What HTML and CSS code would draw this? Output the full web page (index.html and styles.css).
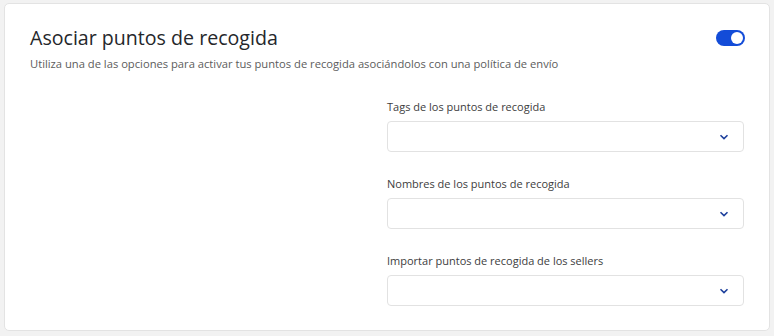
FILE: index.html
```html
<!DOCTYPE html>
<html lang="es">
<head>
<meta charset="utf-8">
<link rel="stylesheet" href="styles.css">
</head>
<body>
<section class="card">
  <div class="head">
    <h1 class="title">Asociar puntos de recogida</h1>
    <span class="toggle"><span class="knob"></span></span>
  </div>
  <p class="desc">Utiliza una de las opciones para activar tus puntos de recogida asociándolos con una política de envío</p>
  <div class="grid">
    <div></div>
    <div class="fields">
      <div class="field">
        <label class="label">Tags de los puntos de recogida</label>
        <div class="select"><svg class="chev" width="10" height="6" viewBox="0 0 10 6"><path d="M1.5 1.2 5 4.6 8.5 1.2" fill="none" stroke="#1d3f9c" stroke-width="1.6"/></svg></div>
      </div>
      <div class="field">
        <label class="label">Nombres de los puntos de recogida</label>
        <div class="select"><svg class="chev" width="10" height="6" viewBox="0 0 10 6"><path d="M1.5 1.2 5 4.6 8.5 1.2" fill="none" stroke="#1d3f9c" stroke-width="1.6"/></svg></div>
      </div>
      <div class="field">
        <label class="label">Importar puntos de recogida de los sellers</label>
        <div class="select"><svg class="chev" width="10" height="6" viewBox="0 0 10 6"><path d="M1.5 1.2 5 4.6 8.5 1.2" fill="none" stroke="#1d3f9c" stroke-width="1.6"/></svg></div>
      </div>
    </div>
  </div>
</section>
</body>
</html>
```
FILE: styles.css
```css
* { box-sizing: border-box; }
html, body { margin: 0; background: #f2f2f2; }
body { padding: 3px 4px 0 4px; font-family: "Open Sans", "Liberation Sans", sans-serif; color: #4a4a4a; }
.card {
  width: 766px;
  height: 328px;
  background: #fff;
  border: 1px solid #e3e3e3;
  border-radius: 5px;
  padding: 21px 25px 0 25px;
}
.head { display: flex; justify-content: space-between; align-items: center; }
.title { margin: 0; font-size: 19.6px; font-weight: 400; color: #25272b; line-height: 26px; }
.toggle {
  width: 29px; height: 16px; border-radius: 8px; background: #134cd8;
  display: flex; align-items: center; justify-content: flex-end; padding: 2px; margin-right: -1px;
}
.knob { width: 12px; height: 12px; border-radius: 50%; background: #fff; }
.desc { margin: 5px 0 0; font-size: 11.2px; line-height: 16px; color: #5c5c5c; }
.grid { display: grid; grid-template-columns: 357px 357px; margin-top: 27px; }
.fields { display: flex; flex-direction: column; gap: 24px; }
.field { display: flex; flex-direction: column; gap: 7px; }
.label { font-size: 11px; line-height: 15px; color: #3d3d3d; }
.select {
  height: 31px; width: 357px; border: 1px solid #e2e2e2; border-radius: 4px;
  display: flex; align-items: center; justify-content: flex-end; padding-right: 14px;
}
.chev { display: block; }
```
